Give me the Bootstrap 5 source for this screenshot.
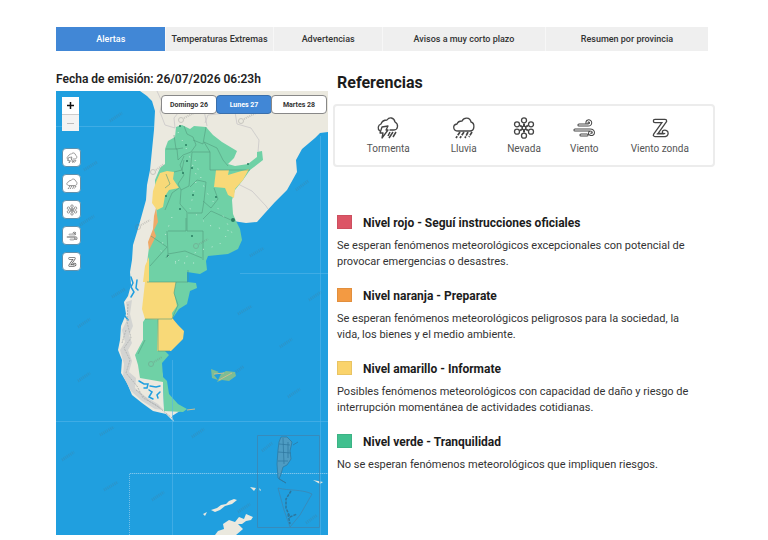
<!DOCTYPE html>
<html lang="es">
<head>
<meta charset="utf-8">
<meta name="viewport" content="width=device-width, initial-scale=1">
<title>Sistema de Alerta Temprana</title>
<link href="https://cdn.jsdelivr.net/npm/bootstrap@5.3.0/dist/css/bootstrap.min.css" rel="stylesheet">
<style>
  body { font-family: Roboto, "Liberation Sans", sans-serif; color: #222; background: #fff; font-size: 12px; line-height: 16px; }
  .page { padding: 27px 53px 0 56px; }
  .tabs { margin-right: 7px; }
  .tabs .nav-link { width: 100%; height: 24px; padding: 0; border: 0; border-left: 1px solid #f7f7f7; border-radius: 0; background: #efefef; color: #333; font-size: 9px; font-weight: 500; line-height: 24px; }
  .tabs .nav-link.active { background: #4187d6; color: #fff; border-color: #4187d6; }
  .content { gap: 5px; margin-top: 20px; }
  .map-col { flex: 272 1 0; min-width: 0; }
  .info-col { flex: 382 1 0; min-width: 0; }
  .issued { font-size: 12px; line-height: 16px; font-weight: 600; margin: 0 0 4px; color: #222; white-space: nowrap; }
  .map { overflow: hidden; }
  .days { top: 4px; right: 1px; }
  .days .btn { width: 56px; height: 19px; padding: 0; margin-left: -1px; font-size: 7px; line-height: 16px; font-weight: 700; color: #333; background: #fff; border: 1px solid #888; border-radius: 4px; }
  .days .btn.active { background: #4187d6; color: #fff; border-color: #3a6fab; }
  .tools { top: 6px; left: 6px; gap: 7px; }
  .zoomer .btn { width: 17px; height: 17px; padding: 0; border: 0; border-radius: 0; background: #fff; line-height: 16px; }
  .zoomer .btn:last-child { background: #f3f3f3; border-top: 1px solid #ccc; }
  .zoomer { margin: 0 0 10px 0; }
  .filter { width: 19px; height: 19px; padding: 0; background: #fff; border: 1px solid #5f91ad; border-radius: 4px; color: #666; }
  .filter svg { width: 12px; height: 12px; }
  h1 { font-size: 16px; line-height: 20px; font-weight: 700; margin: 2px 0 11px 4px; color: #1c1c1c; }
  .legend { display: grid; grid-template-columns: 3fr 2fr 2fr 2fr 3fr; border: 2px solid #ececec; border-radius: 4px; height: 63px; padding: 1px 8px 0; color: #555; font-size: 10px; }
  .legend svg { width: 24px; height: 24px; color: #444; margin-bottom: 1px; }
  .levels { margin: 48px 0 0 4px; gap: 18px; }
  .levels h2 { font-size: 12px; line-height: 17px; font-weight: 700; margin: 0 0 6px; gap: 11px; color: #1c1c1c; }
  .levels p { margin: 0; padding-right: 20px; line-height: 16px; font-size: 11px; color: #333; }
  .swatch { width: 15px; height: 14px; margin-bottom: 3px; border: 1px solid #0001; }
  .rojo { background: #dc5566; } .naranja { background: #f39a42; } .amarillo { background: #fad36b; } .verde { background: #41c08f; }
</style>
<script src="https://cdn.jsdelivr.net/npm/bootstrap@5.3.0/dist/js/bootstrap.bundle.min.js"></script>
</head>
<body>
<svg class="d-none" aria-hidden="true">
  <symbol id="i-storm" viewBox="0 0 24 24"><g fill="none" stroke="currentColor" stroke-width="1.3" stroke-linejoin="round" stroke-linecap="round"><path d="M4 15C1 13 2 9 5 8C6 5 8 4 11 4C13 1 18 1 19 6C23 8 22 14 18 14H14"/><path d="M6 11L12 10L10 14H12L6 22L7 17H4Z"/></g><path d="M14 16L12 20M17 16L13 22M20 16L17 21" stroke="currentColor" stroke-width="1.5"/></symbol>
  <symbol id="i-rain" viewBox="0 0 24 24"><path d="M6 15C1 15 0 9 5 8C6 5 8 5 10 5C12 1 18 1 19 6C23 7 23 15 18 15Z" fill="none" stroke="currentColor" stroke-width="1.3"/><path d="M8 16L4 22M12 16L8 22M16 16L13 22M20 16L17 21" stroke="currentColor" stroke-width="1.7" stroke-dasharray="4 1"/></symbol>
  <symbol id="i-snow" viewBox="0 0 24 24"><g fill="none" stroke="currentColor" stroke-width="1.3"><path d="M12 7.500V16.500M8 9.500L16 14.500M16 9.500L8 14.500" stroke-width="2"/><circle cx="12" cy="12" r="1.800" fill="#fff"/><circle cx="12" cy="4.300" r="2.500"/><circle cx="12" cy="19.700" r="2.500"/><circle cx="5" cy="8.300" r="2.500"/><circle cx="19" cy="8.300" r="2.500"/><circle cx="5" cy="15.700" r="2.500"/><circle cx="19" cy="15.700" r="2.500"/></g></symbol>
  <symbol id="i-wind" viewBox="0 0 24 24"><g fill="none" stroke-linecap="round" stroke-linejoin="round"><path stroke="currentColor" stroke-width="3.200" d="M7 9H16C20 9 19 4 16 5C15 5 15 6 15 7M3 14H18C23 14 22 20 18 18C17 17 18 16 19 16M9 19H15"/><path stroke="#fff" stroke-width="1.200" d="M7 9H16C20 9 19 4 16 5C15 5 15 6 15 7M3 14H18C23 14 22 20 18 18C17 17 18 16 19 16M9 19H15"/></g></symbol>
  <symbol id="i-zonda" viewBox="0 0 24 24"><g fill="none" stroke-linecap="round" stroke-linejoin="round"><path stroke="currentColor" stroke-width="4.600" d="M7 5H17L7 19H15C20 19 19 15 16 16"/><path stroke="#fff" stroke-width="2" d="M7 5H17L7 19H15C20 19 19 15 16 16"/><path stroke="currentColor" d="M9 18H16"/></g></symbol>
</svg>

<div class="page">
  <ul class="nav tabs row g-0 text-center">
    <li class="col-2"><button type="button" class="nav-link active">Alertas</button></li>
    <li class="col-2"><button type="button" class="nav-link">Temperaturas Extremas</button></li>
    <li class="col-2"><button type="button" class="nav-link">Advertencias</button></li>
    <li class="col-3"><button type="button" class="nav-link">Avisos a muy corto plazo</button></li>
    <li class="col-3"><button type="button" class="nav-link">Resumen por provincia</button></li>
  </ul>

  <main class="d-flex content">
    <section class="map-col">
      <p class="issued">Fecha de emisión: 26/07/2026 06:23h</p>
      <div class="map position-relative">
        <svg class="d-block w-100" viewBox="56 91 272 444" role="img" aria-label="Mapa de alertas">
          <path fill="#209fdf" d="M56 91H328V535H56Z"/>
          <!-- continent -->
          <path fill="#ebe9df" d="M140 91L147 96L152 101L155 111L154 130L152 150L150 170L147 185L146 200L141 218L137 232L133 245L132 260L130 272L131 285L128 296L124 302L126 314L121 326L120 340L118 350L122 360L121 373L127 383L132 395L142 403L153 411L166 414L174 422L172 416L180 411L164 408L163 378L160 360L160 345L168 335L168 318L174 303L183 284L183 270L203 255L232 240L233 221L246 223L257 222L265 213L275 202L287 190L297 172L296 160L302 149L315 138L320 133L328 132V91Z"/>
          <!-- fjord coast -->
          <path fill="#d3d4d2" d="M126 302L132 300L130 314L133 326L129 335L132 343L128 350L132 361L129 372L136 378L135 388L146 397L158 404L164 410L155 409L142 401L131 391L123 376L124 364L120 350L125 342L122 330L128 318Z"/>
          <path fill="none" stroke="#209fdf" stroke-width="1.500" stroke-linecap="round" d="M131 277L133 283L131 287L134 292L131 297M137 280L136 288L138 290M125 316L128 320M139 381L144 384L148 384L147 388L144 388M150 386L156 387L160 386M149 390L152 392L149 397L153 399M160 392L157 395L158 398"/>
          <path fill="none" stroke="#b4b7b6" stroke-width="1" stroke-dasharray="2 1" d="M128 304L127 322L131 338L124 348L130 360L126 373L137 386L143 398L156 405L172 418M126 330L122 343M136 390L149 401L160 408"/>
          <!-- neighbouring borders -->
          <path fill="none" stroke="#c9c6c8" stroke-width=".8" d="M157 91L162 102L160 112L165 125L175 128L174 118L182 108L204 110L207 126M205 123L208 115L235 112L237 124L251 128L259 140L258 152M236 183L252 191L266 206L268 209"/>
          <!-- provinces without alerts -->
          <path fill="#6fd1a6" d="M176 127L182 125L190 129L194 126L206 127L213 135L222 142L237 151L234 158L228 164L235 166L248 164L257 157L257 152L262 151L263 160L250 170L243 180L235 190L232 200L233 214L236 221L240 229L242 240L238 249L228 254L208 256L206 261L207 270L200 274L187 272L187 282L196 283L197 288L190 291L187 304L179 309L172 319L164 350L169 355L162 363L163 377L167 381L169 394L178 404L187 409L183 412L164 411L163 382L140 378L138 365L135 355L143 340L143 322L145 319L145 282L148 255L150 240L157 220L156 205L155 180L160 168L165 164L165 149L168 141L175 137Z"/>
          <!-- yellow and orange alerts -->
          <path fill="#f8d978" d="M160 173L167 171L174 172L173 179L179 188L169 190L165 196L163 207L157 210L152 203L153 191L156 182ZM216 170L229 170L228 175L238 172L249 169L243 180L235 189L234 198L228 195L225 188L214 187ZM145 282H176L174 293L177 306L172 313L173 320L145 319L142 309ZM158 319H173L178 325L184 331L183 339L171 351L157 351ZM149 257L145 266L143 282H149L149 269Z"/>
          <path fill="#efaa68" d="M156 208L158 222L154 230L156 236L149 250L148 242L153 229L154 216Z"/>
          <path fill="none" stroke="#529c7e" stroke-width=".6" stroke-linejoin="round" d="M166 149H177L178 160L183 155L191 152L196 145L193 137L187 134L184 126M183 148L176 149L174 135M184 156L180 165L184 175L178 184L181 190L189 186L192 152H210V170H250M204 142L210 152M193 140L203 144L206 127M204 142L217 148L223 160L228 166M174 172L182 170L184 160M179 188L172 193L165 210M166 174L170 184L165 188M181 190L180 204L187 212L187 231H203V260M188 213L202 213L204 201L206 182L197 180L190 187M203 201L211 208L218 199L214 188M203 219L211 211L231 220M168 231H186V218M167 231L168 254L185 251L202 258M151 236L167 247L150 266M168 254L166 258M147 282H188V270M176 282L174 293L178 305L172 319H145M158 319V351H170M145 340L138 354"/>
          <g fill="#287d60"><circle cx="233" cy="220" r="2"/><circle cx="180" cy="126" r="1"/><circle cx="186" cy="145" r="1"/><circle cx="187" cy="161" r="1"/><circle cx="192" cy="168" r="1"/><circle cx="183" cy="173" r="1"/><circle cx="193" cy="195" r="1"/><circle cx="180" cy="209" r="1"/><circle cx="216" cy="197" r="1"/><circle cx="192" cy="236" r="1"/><circle cx="168" cy="256" r="1"/><circle cx="248" cy="164" r="1"/><circle cx="166" cy="196" r="1"/></g>
          <path fill="none" stroke="#c5eddb" stroke-width="1" stroke-dasharray="1 8" d="M178 132L187 150L197 177L190 209L208 225L230 231L219 245L201 250L173 263L195 263M195 160L205 190L224 217L234 237M172 217L160 250L180 265"/>
          <!-- islands -->
          <path fill="#7ebd94" d="M211 369L219 372L214 375L218 380L212 378ZM221 374L226 371L235 372L236 376L229 381L222 380L217 382Z"/>
          <path stroke="#cbbf8f" stroke-width="1" d="M214 374L224 373M219 380L232 373M187 410L195 409" fill="none"/>
          <!-- antarctica -->
          <path fill="#ebe9df" d="M215 535L218 531L224 529L223 524L229 520L235 522L239 517L244 519L246 514L253 517L251 520L246 521L242 524L238 524L243 529L236 535ZM211 510L217 508L221 505L226 504L229 501L234 499L237 500L232 504L225 506L220 510L215 512ZM203 514L207 512L205 516ZM313 480L323 482L320 484ZM250 487L256 488L254 491ZM259 488L261 490L260 491Z"/>
          <!-- graticule -->
          <path fill="none" stroke="#55b6ea" stroke-width="1" opacity=".6" d="M56 126.500H154M240 273.500H328M56 421.500H328M172.500 421V535M172.500 360V421M320.500 136V535M129.500 473.500H328"/>
          <path fill="none" stroke="#98cfec" stroke-width="1" stroke-dasharray="1 1" opacity=".7" d="M129.500 535V473.500H328"/>
          <!-- inset -->
          <path fill="none" stroke="#3c87b2" stroke-width=".8" d="M257.500 435.500H319.500V527.500H257.500ZM278 488C289 491 302 489 312 494L300 515L290 527L284 510Z"/>
          <path fill="#4e9cc3" stroke="#2d769d" stroke-width=".7" d="M281 437L287 437L292 442L290 451L291 459L287 465L283 467L281 474L279 479L286 483L278 478L277 464L278 450L279 442ZM279 444L290 445M278 452L291 453M278 461L288 461M283 438L284 464M288 442V458M293 445L298 442"/>
          <path fill="none" stroke="#2d769d" stroke-width="1.500" stroke-dasharray="3 1" d="M291 491L286 499L286 508L290 517L297 514M288 514L290 524"/>
          <!-- station marks -->
          <g fill="none" stroke="#777" stroke-width="1" opacity=".3"><circle cx="181" cy="120" r="2.500"/><circle cx="241" cy="121" r="2.500"/><circle cx="153" cy="172" r="2.500"/><circle cx="196" cy="246" r="2.500"/><circle cx="138" cy="227" r="2.500"/><circle cx="151" cy="364" r="2.500"/><path stroke-width="2" stroke-dasharray="1 1" d="M184 118L196 112M244 119L256 113M156 170L164 164M199 244L208 239M141 225L150 220M154 362L162 357"/></g>
          <g fill="none" stroke="#4d7a91" stroke-width="3" stroke-dasharray="1 1" opacity=".3"><path d="M110 121L122 113M84 170L97 162M80 225L94 216M112 297L125 289M78 327L90 319M296 190L308 181M250 256L264 248M238 314L252 306M309 300L321 292M280 347L292 339M78 381L90 373M100 435L114 427M192 437L204 429M62 460L74 452M104 490L118 482M152 500L164 492M262 451L272 443M238 512L250 504M306 523L317 515M288 397L300 389M236 372L244 366"/></g>
        </svg>
        <div class="tools position-absolute d-flex flex-column">
          <div class="zoomer d-flex flex-column">
            <button type="button" class="btn d-flex align-items-center justify-content-center" aria-label="Acercar"><svg width="9" height="9" viewBox="0 0 9 9"><path d="M4.500 1V8M1 4.500H8" stroke="#111" stroke-width="1.500"/></svg></button>
            <button type="button" class="btn d-flex align-items-center justify-content-center" aria-label="Alejar"><svg width="9" height="9" viewBox="0 0 9 9"><path d="M1 4.500H8" stroke="#bbb"/></svg></button>
          </div>
          <button type="button" class="filter d-flex align-items-center justify-content-center" aria-label="Tormenta"><svg><use href="#i-storm"/></svg></button>
          <button type="button" class="filter d-flex align-items-center justify-content-center" aria-label="Lluvia"><svg><use href="#i-rain"/></svg></button>
          <button type="button" class="filter d-flex align-items-center justify-content-center" aria-label="Nevada"><svg><use href="#i-snow"/></svg></button>
          <button type="button" class="filter d-flex align-items-center justify-content-center" aria-label="Viento"><svg><use href="#i-wind"/></svg></button>
          <button type="button" class="filter d-flex align-items-center justify-content-center" aria-label="Viento zonda"><svg><use href="#i-zonda"/></svg></button>
        </div>
        <div class="days position-absolute d-flex">
          <button type="button" class="btn">Domingo 26</button>
          <button type="button" class="btn active">Lunes 27</button>
          <button type="button" class="btn">Martes 28</button>
        </div>
      </div>
    </section>

    <section class="info-col">
      <h1>Referencias</h1>
      <div class="legend align-items-center text-center">
        <div><svg class="d-block mx-auto"><use href="#i-storm"/></svg>Tormenta</div>
        <div><svg class="d-block mx-auto"><use href="#i-rain"/></svg>Lluvia</div>
        <div><svg class="d-block mx-auto"><use href="#i-snow"/></svg>Nevada</div>
        <div><svg class="d-block mx-auto"><use href="#i-wind"/></svg>Viento</div>
        <div><svg class="d-block mx-auto"><use href="#i-zonda"/></svg>Viento zonda</div>
      </div>
      <div class="levels d-flex flex-column">
        <article><h2 class="d-flex align-items-center"><span class="swatch rojo"></span>Nivel rojo - Seguí instrucciones oficiales</h2>
          <p>Se esperan fenómenos meteorológicos excepcionales con potencial de provocar emergencias o desastres.</p></article>
        <article><h2 class="d-flex align-items-center"><span class="swatch naranja"></span>Nivel naranja - Preparate</h2>
          <p>Se esperan fenómenos meteorológicos peligrosos para la sociedad, la vida, los bienes y el medio ambiente.</p></article>
        <article><h2 class="d-flex align-items-center"><span class="swatch amarillo"></span>Nivel amarillo - Informate</h2>
          <p>Posibles fenómenos meteorológicos con capacidad de daño y riesgo de interrupción momentánea de actividades cotidianas.</p></article>
        <article><h2 class="d-flex align-items-center"><span class="swatch verde"></span>Nivel verde - Tranquilidad</h2>
          <p>No se esperan fenómenos meteorológicos que impliquen riesgos.</p></article>
      </div>
    </section>
  </main>
</div>
</body>
</html>
